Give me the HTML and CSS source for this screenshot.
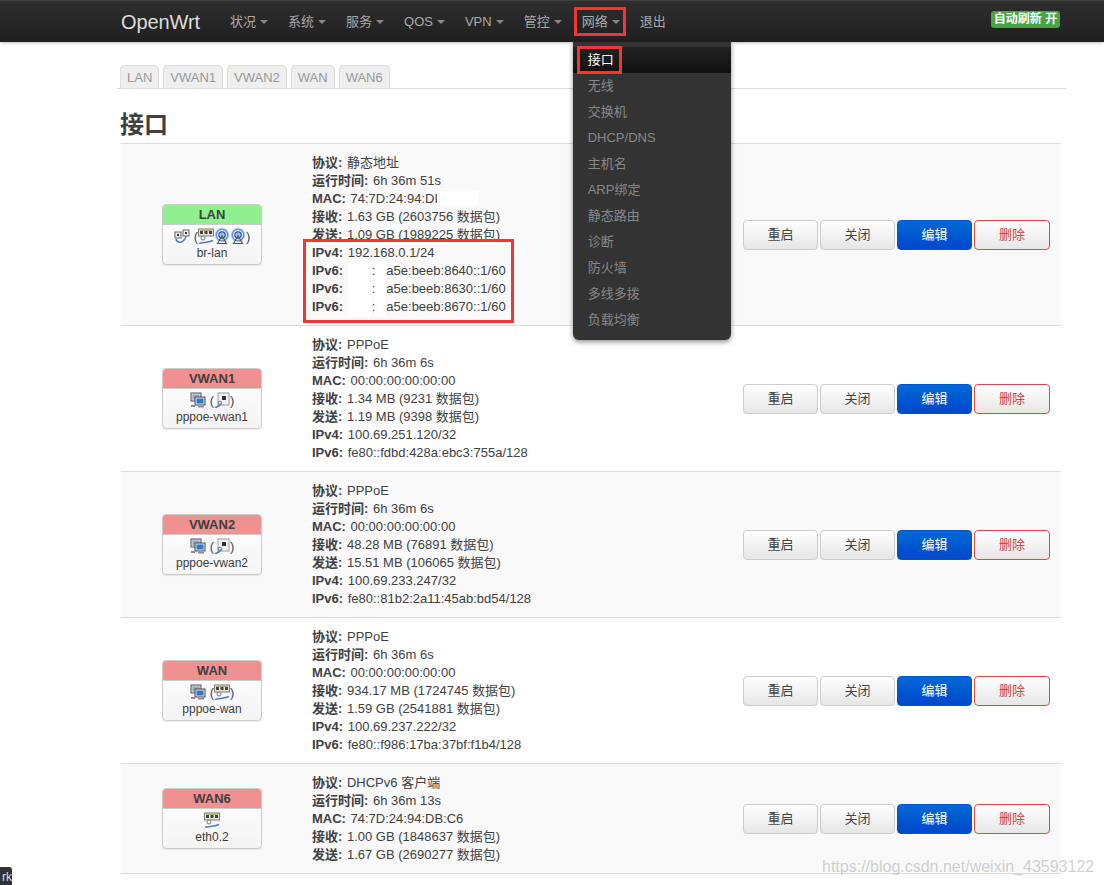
FILE: index.html
```html
<!DOCTYPE html>
<html lang="zh-CN">
<head>
<meta charset="utf-8">
<title>OpenWrt - 接口</title>
<link rel="stylesheet" href="styles.css">
</head>
<body>
<svg class="defs" width="0" height="0" aria-hidden="true">
  <defs>
    <symbol id="i-eth" viewBox="0 0 16 16">
      <rect x="0.5" y="1" width="15" height="7" fill="#e8e8e0" stroke="#777"/>
      <rect x="2" y="3" width="3" height="3" fill="#443"/><rect x="6.5" y="3" width="3" height="3" fill="#443"/><rect x="11" y="3" width="3" height="3" fill="#443"/>
      <rect x="2" y="2" width="12" height="1" fill="#b9b05a"/>
      <circle cx="5" cy="10" r="2" fill="#fff" stroke="#678"/>
      <path d="M1 15.5C6 14 9 15 15 12.5" fill="none" stroke="#4a7ac0" stroke-width="1.6"/>
    </symbol>
    <symbol id="i-wifi" viewBox="0 0 16 16">
      <circle cx="8" cy="7" r="7.5" fill="#cfe0f4"/>
      <circle cx="8" cy="7" r="5.8" fill="none" stroke="#5c8fd0" stroke-width="1.3"/>
      <circle cx="8" cy="7" r="3.2" fill="#9fc1e8" stroke="#2f5d9e" stroke-width="1.2"/>
      <path d="M8 8 3.5 15.5h9z" fill="none" stroke="#555" stroke-width="1.2"/>
    </symbol>
    <symbol id="i-bridge" viewBox="0 0 16 16">
      <rect x="1" y="4" width="6" height="6" fill="#eee" stroke="#666"/>
      <rect x="9" y="2" width="6" height="6" fill="#eee" stroke="#666"/>
      <rect x="3" y="6" width="2" height="2" fill="#333"/><rect x="11" y="4" width="2" height="2" fill="#333"/>
      <path d="M2 11c1 4 5 4 7 2s3-2 3-5" fill="none" stroke="#4a7ac0" stroke-width="1.5"/>
    </symbol>
    <symbol id="i-alias" viewBox="0 0 16 16">
      <rect x="1" y="1" width="10" height="8" fill="#cfd8e4" stroke="#556"/>
      <rect x="2.5" y="2.5" width="7" height="5" fill="#9ab"/>
      <rect x="5" y="5" width="10" height="8" fill="#dfe6ee" stroke="#445"/>
      <rect x="6.5" y="6.5" width="7" height="5" fill="#2f78c8"/>
      <rect x="1" y="13" width="4" height="2" fill="#889"/><rect x="8" y="14" width="6" height="1.5" fill="#889"/>
    </symbol>
    <symbol id="i-tunnel" viewBox="0 0 16 16">
      <rect x="4" y="1" width="11" height="12" fill="#f2f2f2" stroke="#999"/>
      <rect x="8" y="4" width="4" height="4" fill="#333"/>
      <circle cx="6" cy="11" r="1.8" fill="#fff" stroke="#678"/>
      <path d="M1 15.5c4-.5 4-2 6-4" fill="none" stroke="#4a7ac0" stroke-width="1.6"/>
    </symbol>
  </defs>
</svg>

<header class="topbar">
  <a class="brand">OpenWrt</a>
  <nav class="nav">
    <span class="nav-item caret">状况</span>
    <span class="nav-item caret">系统</span>
    <span class="nav-item caret">服务</span>
    <span class="nav-item caret">QOS</span>
    <span class="nav-item caret">VPN</span>
    <span class="nav-item caret">管控</span>
    <span class="nav-item caret open marked">网络
      <ul class="dropdown">
        <li class="active marked-sub">接口</li>
        <li>无线</li>
        <li>交换机</li>
        <li>DHCP/DNS</li>
        <li>主机名</li>
        <li>ARP绑定</li>
        <li>静态路由</li>
        <li>诊断</li>
        <li>防火墙</li>
        <li>多线多拨</li>
        <li>负载均衡</li>
      </ul>
    </span>
    <span class="nav-item">退出</span>
  </nav>
  <span class="refresh">自动刷新 开</span>
</header>

<main class="page">
  <ul class="tabs">
    <li>LAN</li><li>VWAN1</li><li>VWAN2</li><li>WAN</li><li>WAN6</li>
  </ul>
  <h2 class="title">接口</h2>

  <section class="table">
    <article class="row">
      <div class="dev-cell">
        <div class="dev">
          <div class="dev-head up">LAN</div>
          <div class="dev-body">
            <div class="icons"><svg class="ic"><use href="#i-bridge"/></svg><span class="paren first">(</span><svg class="ic"><use href="#i-eth"/></svg><svg class="ic"><use href="#i-wifi"/></svg><svg class="ic"><use href="#i-wifi"/></svg><span class="paren">)</span></div>
            <div class="dev-name">br-lan</div>
          </div>
        </div>
      </div>
      <div class="info">
        <div><b>协议:</b> 静态地址</div>
        <div><b>运行时间:</b> 6h 36m 51s</div>
        <div><b>MAC:</b> 74:7D:24:94:DI<span class="redact r-mac"></span></div>
        <div><b>接收:</b> 1.63 GB (2603756 数据包)</div>
        <div><b>发送:</b> 1.09 GB (1989225 数据包)</div>
        <div class="ip-block">
          <div><b>IPv4:</b> 192.168.0.1/24</div>
          <div><b>IPv6:</b> <span class="redact r-a"></span><span class="colon">:</span><span class="redact r-b"></span>a5e:beeb:8640::1/60</div>
          <div><b>IPv6:</b> <span class="redact r-a"></span><span class="colon">:</span><span class="redact r-b"></span>a5e:beeb:8630::1/60</div>
          <div><b>IPv6:</b> <span class="redact r-a"></span><span class="colon">:</span><span class="redact r-b"></span>a5e:beeb:8670::1/60</div>
        </div>
      </div>
      <div class="actions"><button class="btn">重启</button><button class="btn">关闭</button><button class="btn edit">编辑</button><button class="btn del">删除</button></div>
    </article>

    <article class="row">
      <div class="dev-cell">
        <div class="dev">
          <div class="dev-head down">VWAN1</div>
          <div class="dev-body">
            <div class="icons"><svg class="ic"><use href="#i-alias"/></svg><span class="paren first">(</span><svg class="ic"><use href="#i-tunnel"/></svg><span class="paren">)</span></div>
            <div class="dev-name">pppoe-vwan1</div>
          </div>
        </div>
      </div>
      <div class="info">
        <div><b>协议:</b> PPPoE</div>
        <div><b>运行时间:</b> 6h 36m 6s</div>
        <div><b>MAC:</b> 00:00:00:00:00:00</div>
        <div><b>接收:</b> 1.34 MB (9231 数据包)</div>
        <div><b>发送:</b> 1.19 MB (9398 数据包)</div>
        <div><b>IPv4:</b> 100.69.251.120/32</div>
        <div><b>IPv6:</b> fe80::fdbd:428a:ebc3:755a/128</div>
      </div>
      <div class="actions"><button class="btn">重启</button><button class="btn">关闭</button><button class="btn edit">编辑</button><button class="btn del">删除</button></div>
    </article>

    <article class="row">
      <div class="dev-cell">
        <div class="dev">
          <div class="dev-head down">VWAN2</div>
          <div class="dev-body">
            <div class="icons"><svg class="ic"><use href="#i-alias"/></svg><span class="paren first">(</span><svg class="ic"><use href="#i-tunnel"/></svg><span class="paren">)</span></div>
            <div class="dev-name">pppoe-vwan2</div>
          </div>
        </div>
      </div>
      <div class="info">
        <div><b>协议:</b> PPPoE</div>
        <div><b>运行时间:</b> 6h 36m 6s</div>
        <div><b>MAC:</b> 00:00:00:00:00:00</div>
        <div><b>接收:</b> 48.28 MB (76891 数据包)</div>
        <div><b>发送:</b> 15.51 MB (106065 数据包)</div>
        <div><b>IPv4:</b> 100.69.233.247/32</div>
        <div><b>IPv6:</b> fe80::81b2:2a11:45ab:bd54/128</div>
      </div>
      <div class="actions"><button class="btn">重启</button><button class="btn">关闭</button><button class="btn edit">编辑</button><button class="btn del">删除</button></div>
    </article>

    <article class="row">
      <div class="dev-cell">
        <div class="dev">
          <div class="dev-head down">WAN</div>
          <div class="dev-body">
            <div class="icons"><svg class="ic"><use href="#i-alias"/></svg><span class="paren first">(</span><svg class="ic"><use href="#i-eth"/></svg><span class="paren">)</span></div>
            <div class="dev-name">pppoe-wan</div>
          </div>
        </div>
      </div>
      <div class="info">
        <div><b>协议:</b> PPPoE</div>
        <div><b>运行时间:</b> 6h 36m 6s</div>
        <div><b>MAC:</b> 00:00:00:00:00:00</div>
        <div><b>接收:</b> 934.17 MB (1724745 数据包)</div>
        <div><b>发送:</b> 1.59 GB (2541881 数据包)</div>
        <div><b>IPv4:</b> 100.69.237.222/32</div>
        <div><b>IPv6:</b> fe80::f986:17ba:37bf:f1b4/128</div>
      </div>
      <div class="actions"><button class="btn">重启</button><button class="btn">关闭</button><button class="btn edit">编辑</button><button class="btn del">删除</button></div>
    </article>

    <article class="row">
      <div class="dev-cell">
        <div class="dev">
          <div class="dev-head down">WAN6</div>
          <div class="dev-body">
            <div class="icons"><svg class="ic"><use href="#i-eth"/></svg></div>
            <div class="dev-name">eth0.2</div>
          </div>
        </div>
      </div>
      <div class="info">
        <div><b>协议:</b> DHCPv6 客户端</div>
        <div><b>运行时间:</b> 6h 36m 13s</div>
        <div><b>MAC:</b> 74:7D:24:94:DB:C6</div>
        <div><b>接收:</b> 1.00 GB (1848637 数据包)</div>
        <div><b>发送:</b> 1.67 GB (2690277 数据包)</div>
      </div>
      <div class="actions"><button class="btn">重启</button><button class="btn">关闭</button><button class="btn edit">编辑</button><button class="btn del">删除</button></div>
    </article>
  </section>
</main>

<div class="corner-tab">rk</div>
<div class="watermark">https://blog.csdn.net/weixin_43593122</div>
</body>
</html>
```

FILE: styles.css
```css
*, *::before, *::after { box-sizing: border-box; }
html, body { margin: 0; padding: 0; height: 885px; overflow: hidden; }
body {
  position: relative;
  background: #fff;
  color: #404040;
  font: 13px/18px "Liberation Sans", "Noto Sans CJK SC", sans-serif;
}
.defs { position: absolute; }

.topbar {
  height: 42px;
  display: flex;
  align-items: center;
  padding-left: 121px;
  background-image: linear-gradient(#2e2e2e, #1f1f1f);
  border-top: 1px solid #3a3f44;
  box-shadow: 0 1px 3px rgba(0,0,0,.25);
  position: relative;
  z-index: 5;
}
.brand { color: #ddd; font-size: 20px; letter-spacing: -.1px; width: 99px; }
.nav { display: flex; align-items: center; height: 100%; }
.nav-item {
  position: relative;
  display: flex;
  align-items: center;
  height: 100%;
  padding: 0 10px;
  color: #aaa;
  white-space: nowrap;
}
.caret::after {
  content: "";
  margin-left: 4px;
  border: 4px solid transparent;
  border-top-color: #888;
  border-bottom: 0;
}
.marked::before {
  content: "";
  position: absolute;
  left: 2px; right: 4px; top: 6px; bottom: 6px;
  border: 3px solid #f33535;
}
.dropdown {
  position: absolute;
  left: 1px; top: 41px;
  width: 158px;
  margin: 0;
  padding: 5px 0 7px;
  list-style: none;
  background: #333;
  border-radius: 0 0 6px 6px;
  box-shadow: 0 2px 5px rgba(0,0,0,.45);
}
.dropdown li { position: relative; height: 26px; line-height: 26px; padding-left: 15px; color: #888; }
.dropdown .active { color: #fff; background: linear-gradient(#222, #111); }
.marked-sub::before {
  content: "";
  position: absolute;
  left: 4px; top: -1px; width: 45px; height: 28px;
  border: 3px solid #f33535;
}
.refresh {
  position: absolute;
  left: 991px; top: 10px;
  width: 69px; height: 17px;
  background: #46a546;
  border-radius: 3px;
  color: #fff;
  font-size: 12px; font-weight: bold; line-height: 17px;
  text-align: center;
}

.page { padding: 0 38px 0 117px; }
.tabs {
  display: flex;
  gap: 4px;
  margin: 23px 0 0;
  padding: 0 0 0 3px;
  height: 24px;
  list-style: none;
  border-bottom: 1px solid #ddd;
}
.tabs li {
  height: 24px;
  padding: 0 6px;
  color: #999;
  background: #eee;
  border: 1px solid #ddd;
  border-radius: 4px 4px 0 0;
  font-size: 13px;
  line-height: 23px;
}
.title { margin: 21px 0 0 3px; font-size: 24px; line-height: 30px; font-weight: bold; color: #404040; }

.table { margin: 3px 5px 0 4px; border-top: 1px solid #ddd; }
.row {
  display: flex;
  align-items: center;
  padding: 10px 0 9px;
  border-bottom: 1px solid #ddd;
  background: #f9f9f9;
}
.row:nth-child(even) { background: #fff; }
.dev-cell { width: 182px; flex: none; display: flex; justify-content: center; margin-top: -1px; }
.dev {
  width: 100px;
  border: 1px solid #ccc;
  border-radius: 4px;
  overflow: hidden;
  background: linear-gradient(#fff, #f4f4f4);
  box-shadow: 0 1px 1px rgba(0,0,0,.08);
  text-align: center;
}
.dev-head { height: 20px; line-height: 19px; font-weight: bold; border-bottom: 1px solid #ccc; }
.dev-head.up { background: #90f090; }
.dev-head.down { background: #f09090; }
.dev-body { height: 39px; padding-top: 2px; font-size: 12px; line-height: 15px; }
.icons { display: flex; justify-content: center; align-items: center; height: 18px; color: #446; }
.ic { width: 16px; height: 16px; flex: none; }
.paren { font-size: 13px; }
.paren.first { margin-left: 4px; }
.dev-name { margin-top: 1px; }

.info { flex: 1; margin-left: 9px; white-space: nowrap; min-width: 0; }
.info b { margin-right: 1px; }
.ip-block { position: relative; }
.ip-block::after {
  content: "";
  position: absolute;
  left: -9px; top: -5px; width: 211px; height: 84px;
  border: 3px solid #f33535;
}
.redact { display: inline-block; height: 18px; background: #fff; vertical-align: top; }
.r-mac { width: 41px; height: 14px; margin-top: 1px; margin-left: -1px; }
.r-a { width: 24px; }
.r-b { width: 11px; }

.actions { flex: none; display: flex; gap: 2px; margin: -1px 11px 0 0; }
.btn {
  width: 75px; height: 30px;
  padding: 0 0 2px;
  border: 1px solid #ccc;
  border-radius: 4px;
  background: linear-gradient(#fff, #e6e6e6);
  color: #444;
  font: 13px "Liberation Sans", "Noto Sans CJK SC", sans-serif;
}
.btn.edit { color: #fff; border-color: #05c; background-image: linear-gradient(#0069d6, #0047cc); }
.btn.del { width: 76px; color: #c9444a; border-color: #d9474a; }

.corner-tab {
  position: absolute;
  left: 0; top: 867px;
  width: 12px; height: 18px;
  overflow: hidden;
  background: #2f3338;
  border-radius: 0 3px 0 0;
  color: #ddd;
  font-size: 12px;
  line-height: 20px;
  text-align: right;
}
.watermark {
  position: absolute;
  left: 822px; top: 857px;
  color: rgba(170,170,170,.55);
  font-size: 16px;
  line-height: 20px;
  white-space: nowrap;
}
```
